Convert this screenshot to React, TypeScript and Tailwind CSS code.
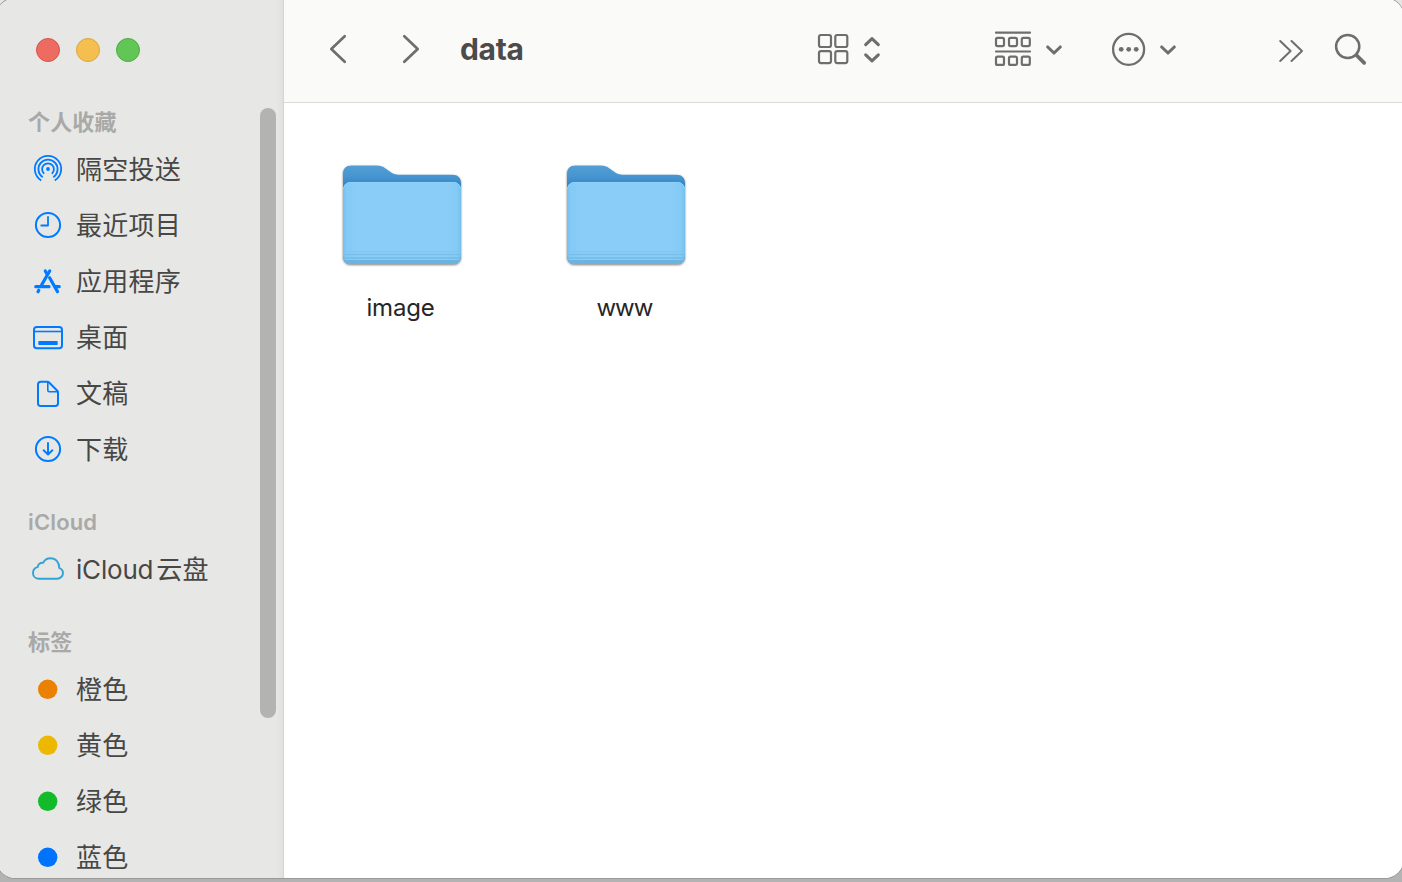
import type { ReactNode } from 'react';

const BLUE = '#007aff';

function RowIcon({ children }: { children: ReactNode }) {
  return (
    <svg
      className="mr-3 h-8 w-8 shrink-0"
      viewBox="0 0 32 32"
      fill="none"
      stroke={BLUE}
      strokeWidth="2"
      strokeLinecap="round"
      strokeLinejoin="round"
    >
      {children}
    </svg>
  );
}

const airdrop = (
  <RowIcon>
    <g strokeWidth="1.8" strokeLinecap="butt">
      <path d="M9.2 27.4a13.2 13.2 0 1 1 13.600 0" />
      <path d="M10.700 24.200a9.600 9.600 0 1 1 10.600 0" />
      <path d="M12.200 20.700a5.900 5.900 0 1 1 7.600 0" />
    </g>
    <circle cx="16" cy="16" r="1.9" fill={BLUE} stroke="none" />
  </RowIcon>
);

const recents = (
  <RowIcon>
    <circle cx="16" cy="16" r="12.1" />
    <path d="M16 8v8.500H9.300" strokeWidth="1.8" />
  </RowIcon>
);

const applications = (
  <RowIcon>
    <g strokeWidth="3.200">
      <path d="M17.700 6 9.700 19.800" />
      <path d="M13.300 6 14.800 8.600" />
      <path d="M3.800 21.700H17" />
      <path d="M17.600 12.800 25.500 26.600" />
      <path d="M23.800 21.700h3.400" />
      <path d="M6.800 25.300 6 26.700" />
    </g>
  </RowIcon>
);

const desktop = (
  <RowIcon>
    <rect x="2" y="6" width="28" height="21.300" rx="2.800" />
    <path d="M2 10.500h28" strokeWidth="1.600" strokeLinecap="butt" />
    <rect x="6.300" y="20" width="19.400" height="4" rx="0.800" fill={BLUE} stroke="none" />
  </RowIcon>
);

const documents = (
  <RowIcon>
    <path d="M8.500 4.800h6.900c.8 0 1.200.2 1.700.7l8.200 8.200c.5.500.7 1 .7 1.700v10.800c0 1.900-.9 2.800-2.800 2.800H8.800c-1.900 0-2.800-.9-2.800-2.800V7.600c0-1.900.9-2.800 2.800-2.800z" />
    <path d="M15.800 5v8.200c0 1 .5 1.500 1.500 1.500h8.300" strokeWidth="1.600" />
  </RowIcon>
);

const downloads = (
  <RowIcon>
    <circle cx="16" cy="16" r="12.100" />
    <path d="M16 10v11.300M11.600 17.300l4.400 4.200 4.400-4.200" strokeWidth="1.900" />
  </RowIcon>
);

const cloud = (
  <svg className="mr-3 h-8 w-8 shrink-0" viewBox="0 0 32 32" fill="none" stroke="#31a3d4" strokeWidth="1.900" strokeLinejoin="round">
    <path d="M7 25.700h18.100c3.300 0 5.900-2.500 5.900-5.600 0-2.500-1.500-4.300-3.700-5C27.300 9.300 23.600 5.200 18.600 5.200c-3.500 0-6.200 1.900-7.500 4.600-2.900-.4-5.200 1.500-5.400 4.300C2.900 14.700 1 16.900 1 19.900c0 3.400 2.600 5.800 6 5.800z" />
  </svg>
);

function Tag({ color }: { color: string }) {
  return (
    <svg className="mr-3 h-8 w-8 shrink-0" viewBox="0 0 32 32">
      <circle cx="15.700" cy="16.300" r="9.700" fill={color} />
    </svg>
  );
}

function Row({ icon, children }: { icon: ReactNode; children: ReactNode }) {
  return (
    <li className="flex h-14 shrink-0 items-center pl-9 text-[26px] leading-none text-[#474745]">
      {icon}
      <span className="pt-px tracking-[0.25px] whitespace-nowrap">{children}</span>
    </li>
  );
}

function Section({ title, children }: { title: string; children: ReactNode }) {
  return (
    <section className="mb-[26px] shrink-0">
      <h2 className="flex h-[38px] items-center pl-8 text-[22px] leading-none font-semibold tracking-[0.15px] text-[#a9a9a7]">{title}</h2>
      <ul>{children}</ul>
    </section>
  );
}

function Sidebar() {
  return (
    <aside className="flex w-[288px] shrink-0 flex-col overflow-hidden border-r border-[#d4d4d3] bg-linear-to-l from-[#e0e0df] to-[#e7e7e6] to-[6px]">
      <div className="flex h-[105px] shrink-0 gap-4 pt-10 pl-10">
        <span className="size-6 rounded-full border border-[#d5554b] bg-[#ed6b60]" />
        <span className="size-6 rounded-full border border-[#dda53e] bg-[#f5bf4f]" />
        <span className="size-6 rounded-full border border-[#4fac41] bg-[#62c656]" />
      </div>
      <div className="flex min-h-0 flex-1">
        <nav className="flex min-w-0 flex-1 flex-col overflow-hidden">
          <Section title="个人收藏">
            <Row icon={airdrop}>隔空投送</Row>
            <Row icon={recents}>最近项目</Row>
            <Row icon={applications}>应用程序</Row>
            <Row icon={desktop}>桌面</Row>
            <Row icon={documents}>文稿</Row>
            <Row icon={downloads}>下载</Row>
          </Section>
          <Section title="iCloud">
            <Row icon={cloud}>
              <span className="mr-[3px] tracking-[-0.2px]">iCloud</span>云盘
            </Row>
          </Section>
          <Section title="标签">
            <Row icon={<Tag color="#ea8102" />}>橙色</Row>
            <Row icon={<Tag color="#ecb802" />}>黄色</Row>
            <Row icon={<Tag color="#13bb2b" />}>绿色</Row>
            <Row icon={<Tag color="#0073fc" />}>蓝色</Row>
          </Section>
        </nav>
        <div className="mt-[5px] mr-[7px] h-[610px] w-4 shrink-0 rounded-full bg-[#b3b3b2]" />
      </div>
    </aside>
  );
}

const line = {
  fill: 'none',
  stroke: '#6e6e6d',
  strokeLinecap: 'round',
  strokeLinejoin: 'round',
} as const;

function Toolbar() {
  return (
    <header className="flex h-[105px] shrink-0 items-center border-b border-[#dadada] bg-[#fafaf9] pb-px pl-[42px]">
      <svg className="h-12 w-6 shrink-0" viewBox="326 26 24 48" {...line} strokeWidth="2.700">
        <path d="M344.700 36.300 331.300 49l13.400 12.700" />
      </svg>
      <svg className="ml-12 h-12 w-6 shrink-0" viewBox="398 26 24 48" {...line} strokeWidth="2.700">
        <path d="M404.300 36.300 417.700 49l-13.400 12.700" />
      </svg>
      <h1 className="ml-[38px] w-[354px] pb-0.5 text-[30px] leading-none font-bold tracking-[-0.3px] text-[#4b4b4b]">data</h1>
      <svg className="h-12 w-[72px] shrink-0" viewBox="814 26 72 48" {...line} strokeWidth="2.200">
        <rect x="819" y="35" width="12" height="12" rx="2" />
        <rect x="835.300" y="35" width="12" height="12" rx="2" />
        <rect x="819" y="51.100" width="12" height="12" rx="2" />
        <rect x="835.300" y="51.100" width="12" height="12" rx="2" />
        <path d="m865.700 44.600 6.300-6 6.300 6M865.700 54.900l6.300 6 6.300-6" strokeWidth="3.100" />
      </svg>
      <svg className="ml-[104px] h-12 w-[76px] shrink-0" viewBox="990 26 76 48" {...line} strokeWidth="2.200">
        <path d="M996 32.700h34M996 51.500h34" />
        <rect x="996" y="37.900" width="8" height="8.200" rx="1.500" />
        <rect x="1009" y="37.900" width="8" height="8.200" rx="1.500" />
        <rect x="1021.800" y="37.900" width="8" height="8.200" rx="1.500" />
        <rect x="996" y="56.700" width="8" height="8.200" rx="1.500" />
        <rect x="1009" y="56.700" width="8" height="8.200" rx="1.500" />
        <rect x="1021.800" y="56.700" width="8" height="8.200" rx="1.500" />
        <path d="m1047.700 47 6.300 6 6.300-6" strokeWidth="3.100" />
      </svg>
      <svg className="ml-[42px] h-12 w-[72px] shrink-0" viewBox="1108 26 72 48" {...line} strokeWidth="2.300">
        <circle cx="1128.600" cy="49.300" r="15.500" />
        <g fill="#6e6e6d" stroke="none">
          <circle cx="1121.200" cy="49.300" r="2.400" />
          <circle cx="1128.700" cy="49.300" r="2.400" />
          <circle cx="1136.200" cy="49.300" r="2.400" />
        </g>
        <path d="m1161.700 47 6.300 6 6.300-6" strokeWidth="3.100" />
      </svg>
      <svg className="ml-[94px] h-12 w-8 shrink-0" viewBox="1274 26 32 48" {...line} strokeWidth="2">
        <path d="M1280.200 41 1290.600 51l-10.400 10M1291.500 41l10.500 10-10.500 10" />
      </svg>
      <svg className="ml-6 h-12 w-10 shrink-0" viewBox="1330 26 40 48" {...line} strokeWidth="2.500">
        <circle cx="1347.700" cy="46.500" r="11.600" />
        <path d="m1356.500 55.200 7.700 7.700" strokeWidth="3.700" />
      </svg>
    </header>
  );
}

function Folder({ id, name, labelClass }: { id: string; name: string; labelClass: string }) {
  return (
    <figure className="flex w-[224px] flex-col items-center">
      <svg className="h-[112px] w-32" viewBox="0 0 128 112">
        <defs>
          <linearGradient id={id + '-back'} x1="0" y1="5" x2="0" y2="28" gradientUnits="userSpaceOnUse">
            <stop offset="0" stopColor="#549fd6" />
            <stop offset="0.500" stopColor="#4795d0" />
            <stop offset="1" stopColor="#337fc1" />
          </linearGradient>
          <linearGradient id={id + '-front'} x1="0" y1="0" x2="1" y2="0">
            <stop offset="0" stopColor="#76c0ec" />
            <stop offset="0.030" stopColor="#83caf6" />
            <stop offset="0.120" stopColor="#8acdf8" />
            <stop offset="0.880" stopColor="#8acdf8" />
            <stop offset="0.970" stopColor="#83caf6" />
            <stop offset="1" stopColor="#76c0ec" />
          </linearGradient>
          <filter id={id + '-shadow'} x="-10%" y="-10%" width="120%" height="120%">
            <feDropShadow dx="0" dy="1" stdDeviation="1.100" floodColor="#000" floodOpacity="0.500" />
          </filter>
          <clipPath id={id + '-clip'}>
            <rect x="5" y="22" width="118" height="82" rx="8" />
          </clipPath>
        </defs>
        <g filter={`url(#${id}-shadow)`}>
          <path
            d="M5 14c0-5.500 3-8.500 8.500-8.500h25c4 0 6 .8 9 3l5 3.600c2.500 1.800 5 2.600 8.500 2.600h53.500c5.500 0 8.500 3 8.500 8.500V96c0 5-3 8-8 8H13c-5 0-8-3-8-8z"
            fill={`url(#${id}-back)`}
          />
          <rect x="5" y="22" width="118" height="82" rx="8" fill={`url(#${id}-front)`} />
        </g>
        <g clipPath={`url(#${id}-clip)`}>
          <path d="M5 91.500h118" stroke="#7fc7f2" strokeWidth="1" />
          <path d="M5 94.500h118" stroke="#78bfed" strokeWidth="1.500" />
          <path d="M5 98h118" stroke="#72b9e6" strokeWidth="1.500" />
          <path d="M5 102h118" stroke="#6cb3e1" strokeWidth="4" />
        </g>
        <path d="M5.500 29c.4-4.200 3-6.500 7.500-6.500h102c4.500 0 7.100 2.300 7.500 6.500" fill="none" stroke="#8fd3fb" strokeWidth="1" />
      </svg>
      <figcaption className={`mt-[21px] pr-[3px] leading-[30px] text-[#262626] ${labelClass}`}>{name}</figcaption>
    </figure>
  );
}

export default function App() {
  return (
    <div className="h-[882px] w-[1402px] overflow-hidden bg-linear-to-b from-[#e6e6e6] to-[#b3b3b3] font-['Inter','Noto_Sans_CJK_SC',sans-serif]">
      <div className="-mt-0.5 -ml-1 flex h-[880px] w-[1408px] overflow-hidden rounded-[20px] bg-white shadow-[0_0_0_1px_#999]">
        <Sidebar />
        <div className="flex min-w-0 flex-1 flex-col bg-white">
          <Toolbar />
          <main className="flex pt-[57px] pl-[6px]">
            <Folder id="folder-image" name="image" labelClass="text-[24px] tracking-[-0.2px]" />
            <Folder id="folder-www" name="www" labelClass="text-[24px] tracking-[-0.9px]" />
          </main>
        </div>
      </div>
    </div>
  );
}
